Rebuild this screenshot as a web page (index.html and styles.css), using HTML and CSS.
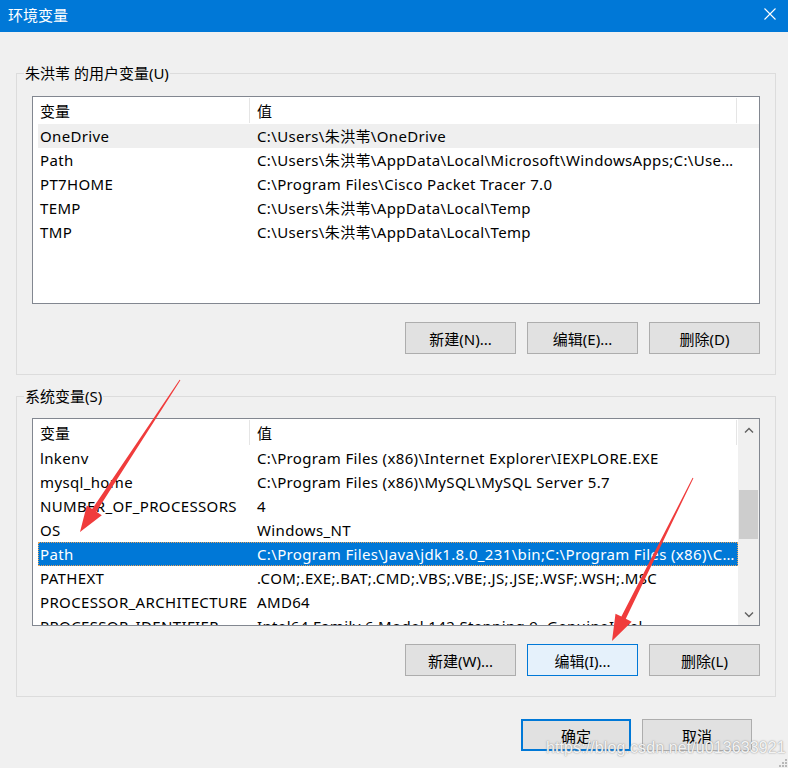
FILE: index.html
```html
<!DOCTYPE html>
<html lang="zh-CN">
<head>
  <meta charset="UTF-8">
  <meta name="viewport" content="width=device-width, initial-scale=1.0">
  <title>环境变量</title>
  <link rel="stylesheet" href="styles.css">
</head>
<body>
  <div class="window">
    <div class="titlebar">
      <span class="title">环境变量</span>
      <svg class="close" width="12" height="12" viewBox="0 0 12 12">
        <path d="M0.5 0.5 L11.5 11.5 M11.5 0.5 L0.5 11.5" stroke="#fff" stroke-width="1.1" fill="none"/>
      </svg>
    </div>

    <fieldset class="group group-user">
      <legend>朱洪苇 的用户变量(U)</legend>
      <div class="list">
        <div class="list-body">
          <div class="list-head">
            <div class="hcell">变量</div>
            <div class="hcell">值</div>
          </div>
          <div class="rows">
            <div class="row hover"><span>OneDrive</span><span>C:\Users\朱洪苇\OneDrive</span></div>
            <div class="row"><span>Path</span><span>C:\Users\朱洪苇\AppData\Local\Microsoft\WindowsApps;C:\Users\朱洪苇\AppData\Roaming\npm</span></div>
            <div class="row"><span>PT7HOME</span><span>C:\Program Files\Cisco Packet Tracer 7.0</span></div>
            <div class="row"><span>TEMP</span><span>C:\Users\朱洪苇\AppData\Local\Temp</span></div>
            <div class="row"><span>TMP</span><span>C:\Users\朱洪苇\AppData\Local\Temp</span></div>
          </div>
        </div>
      </div>
      <div class="actions">
        <button class="btn">新建(N)...</button>
        <button class="btn">编辑(E)...</button>
        <button class="btn">删除(D)</button>
      </div>
    </fieldset>

    <fieldset class="group group-system">
      <legend>系统变量(S)</legend>
      <div class="list">
        <div class="list-body">
          <div class="list-head">
            <div class="hcell">变量</div>
            <div class="hcell">值</div>
          </div>
          <div class="rows">
            <div class="row"><span>lnkenv</span><span>C:\Program Files (x86)\Internet Explorer\IEXPLORE.EXE</span></div>
            <div class="row"><span>mysql_home</span><span>C:\Program Files (x86)\MySQL\MySQL Server 5.7</span></div>
            <div class="row"><span>NUMBER_OF_PROCESSORS</span><span>4</span></div>
            <div class="row"><span>OS</span><span>Windows_NT</span></div>
            <div class="row selected"><span>Path</span><span>C:\Program Files\Java\jdk1.8.0_231\bin;C:\Program Files (x86)\Common Files\Oracle\Java\javapath</span></div>
            <div class="row"><span>PATHEXT</span><span>.COM;.EXE;.BAT;.CMD;.VBS;.VBE;.JS;.JSE;.WSF;.WSH;.MSC</span></div>
            <div class="row"><span>PROCESSOR_ARCHITECTURE</span><span>AMD64</span></div>
            <div class="row"><span>PROCESSOR_IDENTIFIER</span><span>Intel64 Family 6 Model 142 Stepping 9, GenuineIntel</span></div>
          </div>
        </div>
        <div class="scrollbar">
          <div class="sb-btn">
            <svg width="10" height="6" viewBox="0 0 10 6"><path d="M1 5.5 L5 1.5 L9 5.5" stroke="#606060" stroke-width="1.4" fill="none"/></svg>
          </div>
          <div class="sb-track"><div class="sb-thumb"></div></div>
          <div class="sb-btn">
            <svg width="10" height="6" viewBox="0 0 10 6"><path d="M1 0.5 L5 4.5 L9 0.5" stroke="#606060" stroke-width="1.4" fill="none"/></svg>
          </div>
        </div>
      </div>
      <div class="actions">
        <button class="btn">新建(W)...</button>
        <button class="btn btn-hot">编辑(I)...</button>
        <button class="btn">删除(L)</button>
      </div>
    </fieldset>

    <div class="dialog-actions">
      <button class="btn btn-default">确定</button>
      <button class="btn">取消</button>
    </div>
  </div>

  <!-- red annotation arrows -->
  <svg class="marks" width="788" height="768" viewBox="0 0 788 768">
    <polygon fill="#f03c3c" points="180.4,380.3 96.4,511.7 101.8,515.2 80,532 86.8,505.4 92.2,508.9 179.6,379.7"/>
    <polygon fill="#f03c3c" points="693.4,478.2 625.8,618.8 631.7,621.7 612,641 615.5,613.7 621.4,616.6 692.6,477.8"/>
  </svg>

  <svg class="grip" width="10" height="10" viewBox="0 0 10 10">
    <rect x="7" y="1" width="2" height="2" fill="#b8b8b8"/>
    <rect x="4" y="4" width="2" height="2" fill="#b8b8b8"/>
    <rect x="7" y="4" width="2" height="2" fill="#b8b8b8"/>
    <rect x="1" y="7" width="2" height="2" fill="#b8b8b8"/>
    <rect x="4" y="7" width="2" height="2" fill="#b8b8b8"/>
    <rect x="7" y="7" width="2" height="2" fill="#b8b8b8"/>
  </svg>

  <div class="watermark">https://blog.csdn.net/u013633921</div>
</body>
</html>
```

FILE: styles.css
```css
html, body { margin: 0; padding: 0; }
body {
  width: 788px; height: 768px; overflow: hidden; position: relative;
  background: #f0f0f0; color: #000;
  font-family: "Noto Sans", "Noto Sans CJK SC", sans-serif; font-size: 15px;
}

.titlebar { height: 32px; background: #0078d7; color: #fff; display: flex; align-items: center; justify-content: space-between; padding: 0 12px 0 8px; }
.title { line-height: 20px; margin-top: -2px; }
.close { margin-top: -4px; }

.group { margin: 31px 12px 0 16px; padding: 13px 15px 20px 15px; border: 1px solid #dcdcdc; min-width: 0; }
.group legend { margin-left: -8px; padding: 0 1px; line-height: 20px; }
.group-system { margin-top: 11px; padding-top: 12px; }

.list { height: 206px; border: 1px solid #828790; background: #fff; display: flex; overflow: hidden; }
.list-body { flex: 1; min-width: 0; }
.list-head { display: grid; grid-template-columns: 217px 487px; height: 27px; }
.hcell { padding: 1px 0 0 7px; line-height: 24px; border-right: 1px solid #e5e5e5; margin: 1px 0 3px; box-sizing: border-box; }
.rows { padding-left: 5px; }
.row { display: grid; grid-template-columns: 212px 487px; height: 24px; line-height: 24px; letter-spacing: 0.35px; }
.row span { padding-left: 2px; white-space: nowrap; overflow: hidden; text-overflow: ellipsis; }
.row span + span { padding-left: 7px; }
.row.hover { background: #efefef; }
.row.selected { background: #0078d7; color: #fff; outline: 1px dotted #e9a35a; outline-offset: -1px; }

.scrollbar { width: 21px; background: #f0f0f0; display: flex; flex-direction: column; }
.sb-btn { height: 21px; display: flex; align-items: center; justify-content: center; }
.sb-track { flex: 1; }
.sb-thumb { margin: 50px 1px 0; height: 49px; background: #cdcdcd; }

.actions { display: flex; justify-content: flex-end; gap: 11px; margin-top: 18px; }
.btn { width: 111px; height: 32px; background: #e1e1e1; border: 1px solid #adadad; font: inherit; color: #000; padding: 0; }
.btn-hot { background: #e5f1fb; border-color: #0078d7; }

.dialog-actions { display: flex; justify-content: flex-end; gap: 11px; margin: 22px 36px 0 0; }
.dialog-actions .btn { width: 110px; }
.btn-default { border: 2px solid #0078d7; }

.marks { position: absolute; left: 0; top: 0; pointer-events: none; }
.grip { position: absolute; right: 0; bottom: 0; }
.watermark {
  position: absolute; left: 546px; top: 739px;
  font-family: "Liberation Sans", sans-serif; font-size: 16px; letter-spacing: 0.1px;
  color: rgba(255, 255, 255, 0.9);
  text-shadow: 0 0 1px #9a9a9a, 0 0 2px rgba(140, 140, 140, 0.7);
}
```
